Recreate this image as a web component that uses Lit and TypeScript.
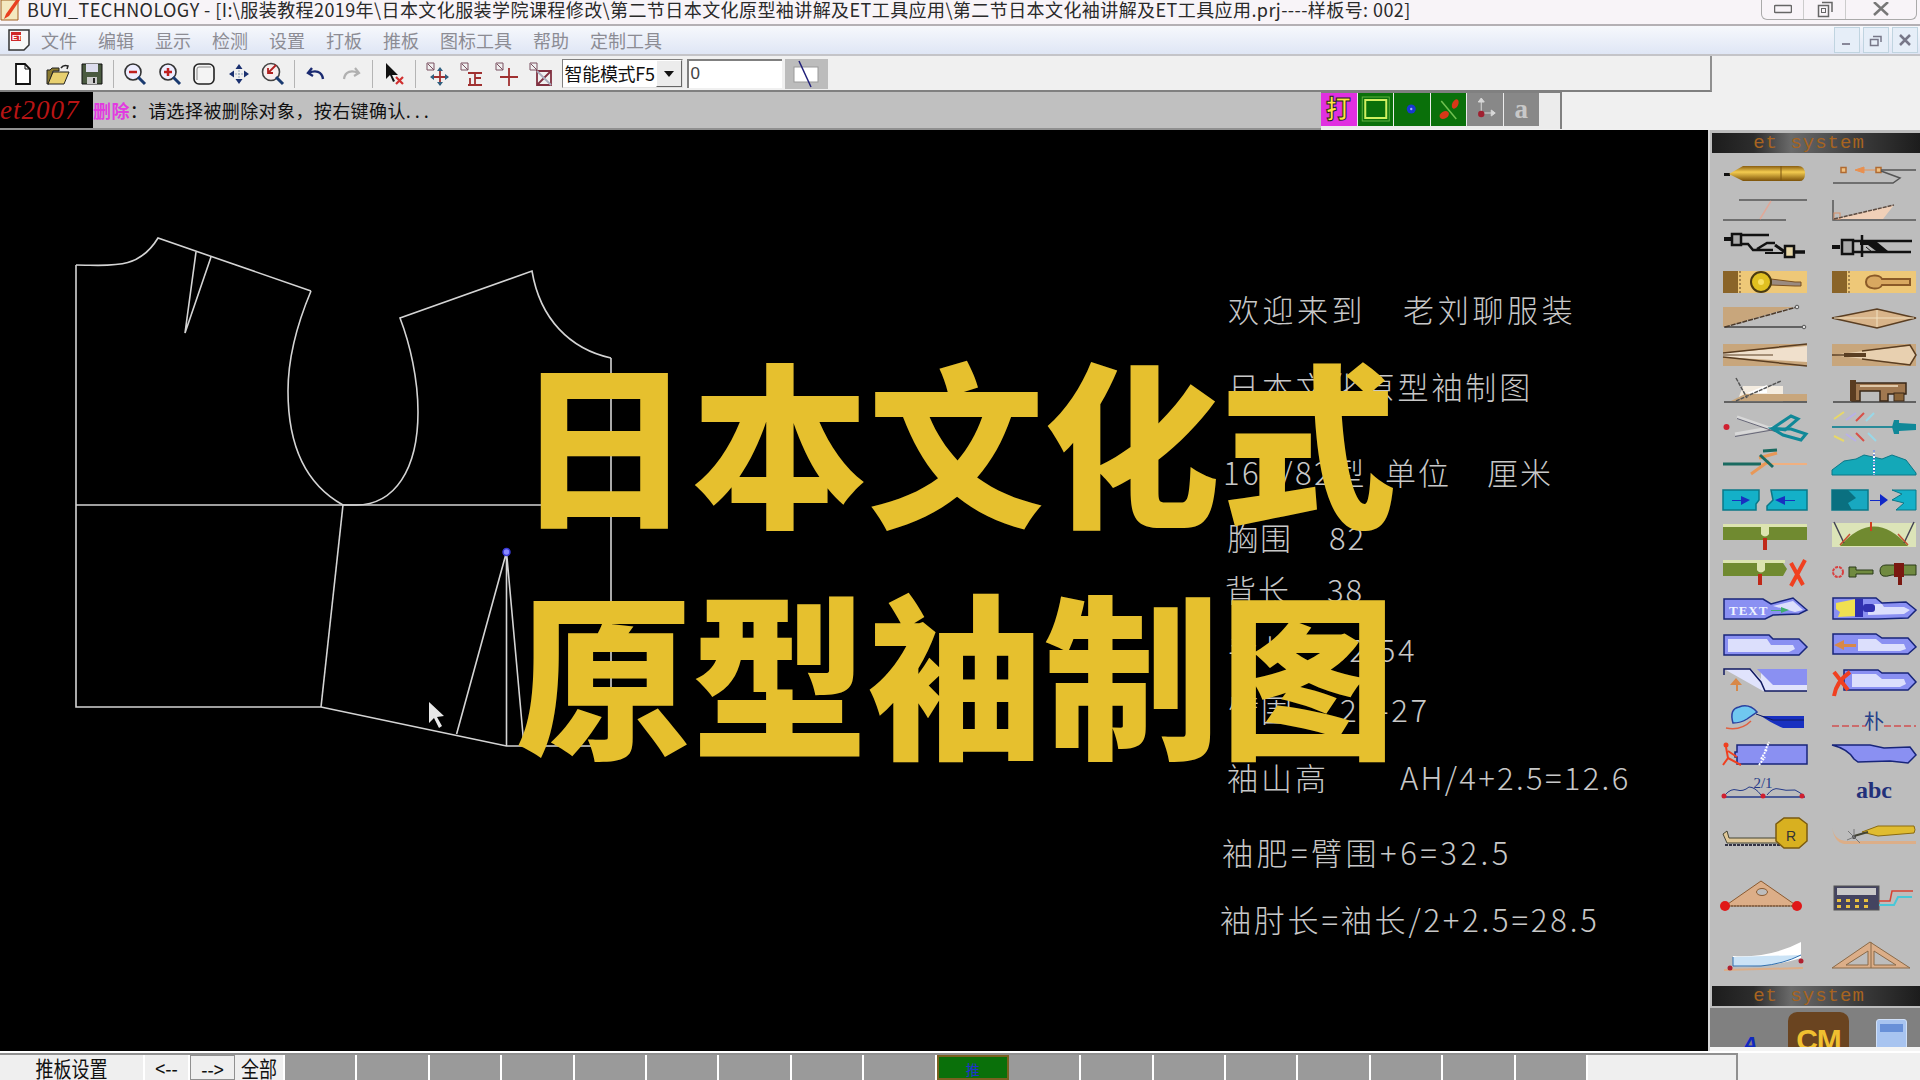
import { LitElement, html, css, svg } from 'lit';
import { customElement } from 'lit/decorators.js';

const CJK = `"Noto Sans CJK SC", "Noto Sans", sans-serif`;

const MENU = ['文件', '编辑', '显示', '检测', '设置', '打板', '推板', '图标工具', '帮助', '定制工具'];

// toolbar glyphs, null is a separator
const TOOLS = [
  svg`<path d="M5 2h9l5 5v15H5z" fill="#fff" stroke="#111" stroke-width="1.800"/><path d="M14 2v5h5" fill="none" stroke="#111"/>`,
  svg`<path d="M1 22V8h3l2-2h7v3H7L3 22z" fill="#8a7a30" stroke="#222"/><path d="M2 22l5-12h16l-5 12z" fill="#e8d070" stroke="#222"/><path d="M15 6c2-3 4-3 7-2l-1 3" fill="none" stroke="#222" stroke-width="1.500"/>`,
  svg`<path d="M2 2h20v20H2z" fill="#4a5a40" stroke="#111"/><path d="M6 2h12v8H6z" fill="#dde"/><path d="M7 15h10v7H7z" fill="#ccc"/><path d="M13 16h2v5h-2z" fill="#222"/>`,
  null,
  svg`<circle cx="10" cy="10" r="8" fill="#eef" stroke="#333" stroke-width="1.600"/><path d="M6 10h8" stroke="#c02020" stroke-width="2.500"/><path d="M15 15l7 7" stroke="#1a3a70" stroke-width="3"/>`,
  svg`<circle cx="10" cy="10" r="8" fill="#eef" stroke="#333" stroke-width="1.600"/><path d="M6 10h8M10 6v8" stroke="#c02020" stroke-width="2.500"/><path d="M15 15l7 7" stroke="#1a3a70" stroke-width="3"/>`,
  svg`<rect x="2" y="2" width="20" height="20" rx="5" fill="#f4f4f4" stroke="#222" stroke-width="1.600"/><path d="M5 18V7q0-2 2-2h12" fill="none" stroke="#888"/>`,
  svg`<path d="M12 2l3.500 5h-7zM12 22l-3.500-5h7zM2 12l5-3.500v7zM22 12l-5 3.500v-7z" fill="#1a3070"/><path d="M12 8v8M8 12h8" stroke="#9ab" stroke-dasharray="2 1"/>`,
  svg`<circle cx="10" cy="10" r="8.500" fill="#f8eeee" stroke="#444" stroke-width="1.600"/><path d="M15 3L7 11M7 6v5h5" fill="none" stroke="#b02020" stroke-width="1.800"/><path d="M15 15l7 7" stroke="#1a3a70" stroke-width="3"/>`,
  null,
  svg`<path d="M8 6L4 11l5 3M5 11c6-3 13-2 14 6" fill="none" stroke="#1a2a70" stroke-width="2.400"/>`,
  svg`<path d="M16 6l4 5-5 3M19 11c-6-3-13-2-14 6" fill="none" stroke="#b0b0b0" stroke-width="2.200"/>`,
  null,
  svg`<path d="M4 1l0 16 4-4 3 7 2-1-3-6h6z" fill="#111"/><path d="M14 15l7 7M21 15l-7 7" stroke="#d03030" stroke-width="2.200"/>`,
  null,
  svg`<path d="M2 1h7v7H2zM3 2l6 6" fill="none" stroke="#7a5060"/><path d="M15 7v16M7 15h16" stroke="#a03030" stroke-width="1.800"/><path d="M15 5l-3 4h6zM15 24l-3-4h6zM5 15l4-3v6zM24 15l-4-3v6z" fill="#306080"/>`,
  svg`<path d="M2 1h7v7H2zM3 2l6 6" fill="none" stroke="#7a5060"/><path d="M9 11h14M16 11v12M11 16v7M9 23h14M16 16h6" fill="none" stroke="#a03030" stroke-width="1.800"/>`,
  svg`<path d="M2 1h7v7H2zM3 2l6 6" fill="none" stroke="#7a5060"/><path d="M15 6v18M6 15h18" stroke="#a03030" stroke-width="1.800"/>`,
  svg`<path d="M2 1h7v7H2zM3 2l6 6" fill="none" stroke="#7a5060"/><path d="M9 9h14v14H9zM9 23L23 9" fill="none" stroke="#803040" stroke-width="1.800"/><path d="M9 9l14 14" stroke="#aab" stroke-width="1.800"/>`,
];

const STATUS_BTNS = [
  { cls: 'magenta', icon: svg`<text x="17" y="25" font-size="25" font-weight="700" text-anchor="middle" fill="#ffe640" stroke="#222" stroke-width="1" font-family=${CJK}>打</text>` },
  { cls: 'green', icon: svg`<rect x="7" y="7" width="21" height="18" fill="#0a700a" stroke="#d0f060" stroke-width="2"/><rect x="4" y="4" width="27" height="24" fill="none" stroke="#60b040"/>` },
  { cls: 'green', icon: svg`<circle cx="17" cy="16" r="4.500" fill="#1838d0"/><circle cx="17" cy="16" r="1.200" fill="#a0b0ff"/>` },
  { cls: 'green', icon: svg`<path d="M10 8l15 18" stroke="#70c050" stroke-width="1.500"/><ellipse cx="24" cy="11" rx="3" ry="5" fill="#d83818" transform="rotate(25 24 11)"/><ellipse cx="13" cy="22" rx="5" ry="3.500" fill="#d83818" transform="rotate(-30 13 22)"/>` },
  { cls: 'gray', icon: svg`<path d="M14 6v14M14 20h13M14 5l-3 4h6zM28 20l-4-3v6z" stroke="#d8d8d8" fill="#d8d8d8"/><circle cx="14" cy="21" r="3.200" fill="#a02030"/>` },
  { cls: 'gray', icon: svg`<text x="17" y="25" font-size="27" font-weight="700" text-anchor="middle" fill="#c8c8c8" font-family="Liberation Serif">a</text>` },
];

// one left/right pair per row, drawn in a 84x34 box
const bar = (y: number, h: number, c: string) => svg`<rect x="0" y=${y} width="84" height=${h} fill=${c}/>`;
const stair = '#5a3e22';

const blue = (shape: string, inner: string) => svg`<path d=${shape} fill="#8a90f2" stroke="#18257a" stroke-width="1.500"/><path d=${inner} fill="#dcdffc"/>`;

const ICONS = [
  svg`<defs><linearGradient id="gold" x1="0" y1="0" x2="0" y2="1"><stop offset="0" stop-color="#8a5e10"/><stop offset=".4" stop-color="#f4cc50"/><stop offset="1" stop-color="#7a5008"/></linearGradient></defs>
    <path d="M1 17h6v3H1z" fill="#111"/><path d="M6 18l14-8h55q7 0 7 8t-7 7H20z" fill="url(#gold)"/><path d="M58 10v15" stroke="#7a5510"/>`,
  svg`<rect x="9" y="11.500" width="5" height="5" fill="#f0c080" stroke="#b06a30" stroke-width="1.500"/><path d="M43 14H32V11L23 14L32 17V14" fill="#e89050" stroke="#e89050"/><rect x="44" y="11.500" width="5" height="5" fill="#f0c080" stroke="#b06a30" stroke-width="1.500"/><path d="M49 14H84" stroke="#555" stroke-width="1.500"/><path d="M49 15L68 22L61 27H1" fill="none" stroke="#555" stroke-width="1.500"/>`,
  svg`<path d="M16 8H84M0 28H63" stroke="#555" stroke-width="1.500"/><path d="M48 9L37 27" stroke="#e0a898" stroke-width="1.500"/>`,
  svg`<path d="M2 27L51 27L62 13Z" fill="#f0d0b8"/><path d="M1 8V28H84" fill="none" stroke="#555" stroke-width="1.500"/><rect x="2" y="21" width="6" height="6" fill="none" stroke="#d89068"/><path d="M2 27L62 13" stroke="#5a4a40" stroke-width="1.500" stroke-dasharray="4 1"/>`,
  svg`<path d="M1 10H9" stroke="#111" stroke-width="4"/><path d="M18 6L46 6M18 15H25L30 21H50M34 20L44 14H52" stroke="#111" stroke-width="2.500" fill="none"/><path d="M42 24H60" stroke="#111" stroke-width="2"/><path d="M52 16L62 23" stroke="#111" stroke-width="3"/><rect x="9" y="5" width="9" height="11" fill="#aaa" stroke="#111" stroke-width="2.500"/><rect x="62" y="17" width="9" height="11" fill="#e8d8a8" stroke="#111" stroke-width="2.500"/><path d="M71 23h11" stroke="#111" stroke-width="3.500"/>`,
  svg`<path d="M0 18h8" stroke="#111" stroke-width="4"/><rect x="10" y="11" width="11" height="14" fill="#aaa" stroke="#111" stroke-width="2.500"/><path d="M21 12H80M21 23H79M30 6V28" stroke="#111" stroke-width="2.500" fill="none"/><path d="M28 13H45L56 22H44L36 16H28Z" fill="#111"/><path d="M34 18l6 5" stroke="#111"/>`,
  svg`${bar(6, 22, '#eec878')}<rect x="0" y="6" width="15" height="22" fill="#8a6428"/><path d="M17 6v22" stroke="#5a3e22" stroke-dasharray="2 2"/><path d="M48 14L72 17H78V21H72L48 20Z" fill="#9a8a80" stroke="#7a5020"/><circle cx="38" cy="17" r="10" fill="#e0c020" stroke="#4a3a10" stroke-width="2"/><circle cx="38" cy="17" r="3" fill="#f8e060"/>`,
  svg`${bar(6, 22, '#eec878')}<rect x="0" y="6" width="15" height="22" fill="#8a6428"/><path d="M17 6v22" stroke="#5a3e22" stroke-dasharray="2 2"/><path d="M34 17C34 9 48 9 50 14H78V20H50C48 25 34 25 34 17Z" fill="#d8a860" stroke="#8a5a28" stroke-width="2"/>`,
  svg`<path d="M0 6H70L1 26H0Z" fill="#c8a67c"/><path d="M1 26H80" stroke="#444" stroke-width="1.500"/><path d="M2 26L74 6" stroke="#4a3828" stroke-width="1.500" stroke-dasharray="5 1"/><circle cx="74" cy="6" r="1.800" fill="#ddd" stroke="#555"/><circle cx="81" cy="26" r="1.800" fill="#ddd" stroke="#555"/>`,
  svg`<path d="M0 17L45 8L84 17L45 27Z" fill="#d8b48a" stroke=${stair} stroke-width="1.500"/><path d="M2 17H82M45 9V26" stroke="#f0e0c0"/>`,
  svg`${bar(6, 22, '#c8a67c')}<path d="M0 15L84 8V24L0 19Z" fill="#f0e0cc"/><path d="M0 15L84 6M0 19L84 28" stroke=${stair} stroke-width="1.500" fill="none"/><path d="M0 17H50" stroke=${stair}/>`,
  svg`${bar(6, 22, '#c8a67c')}<path d="M0 17L40 12L78 8L84 17L78 26L40 22Z" fill="#e8d0b0"/><path d="M0 17H30" stroke=${stair} stroke-width="1.500"/><path d="M12 15h22v4H12z" fill=${stair}/><path d="M30 13L78 7L84 17L78 27L30 21" fill="none" stroke=${stair} stroke-width="1.500"/>`,
  svg`<path d="M20 12L60 12V28H14Z" fill="#f4ece0"/><path d="M22 20H84V27H8Z" fill="#c8a67c"/><path d="M24 19L44 11V19Z" fill="#fff"/><path d="M1 28H84" stroke="#444" stroke-width="1.500"/><path d="M13 27L58 7M13 4L24 24" stroke="#555" stroke-width="1.500" stroke-dasharray="4 1" fill="none"/>`,
  svg`<path d="M1 28H84" stroke="#444" stroke-width="1.500"/><path d="M20 9H74V20H56V27H48V17H28V27H20Z" fill="#a07850" stroke="#3a2818" stroke-width="1.500"/><path d="M28 12H66" stroke="#e0c8a8" stroke-width="2"/><rect x="18" y="6" width="6" height="21" fill="#5a3c20"/><rect x="62" y="19" width="10" height="8" fill="#8a6438" stroke="#3a2818"/>`,
  svg`<circle cx="3.500" cy="17" r="3" fill="#d02030"/><path d="M14 7L52 20M12 24L52 17" stroke="#d8d8d8" stroke-width="3"/><path d="M14 7L52 20M12 25L52 18" stroke="#667" transform="translate(0 1.500)"/><path d="M50 18L68 6L75 9L62 20Z" fill="none" stroke="#108898" stroke-width="3"/><path d="M50 19H68L83 24L78 30L60 25Z" fill="none" stroke="#108898" stroke-width="3"/>`,
  svg`<path d="M0 17H84" stroke="#2a8a98" stroke-width="2"/><path d="M2 9L12 2M2 26L12 31" stroke="#e8d868" stroke-width="2"/><path d="M14 10L24 3M14 24L24 31" stroke="#b8b0e8" stroke-width="2"/><path d="M24 11L32 3M24 23L32 31" stroke="#d85048" stroke-width="2"/><path d="M34 11L42 3M36 23L44 31" stroke="#98d8e8" stroke-width="2"/><path d="M60 17L62 10H67V24H62ZM67 13L84 14V20L67 21Z" fill="#108898"/>`,
  svg`<path d="M0 17H38" stroke="#1a6a60" stroke-width="3"/><path d="M38 17H84" stroke="#f0b080" stroke-width="2"/><path d="M36 11L54 6M28 27L46 14" stroke="#e89858" stroke-width="3"/><path d="M37 8L50 20" stroke="#1a6a60" stroke-width="3"/><path d="M40 4L54 3" stroke="#1a6a60" stroke-width="3"/>`,
  svg`<path d="M0 28V23L12 14L24 12L32 8L50 12L60 8L74 13L84 26V28Z" fill="#14a8b8" stroke="#0a7888"/><path d="M42 3V28" stroke="#fff" stroke-width="2" stroke-dasharray="2 1"/><path d="M42 3V28" stroke="#1840c0" stroke-dasharray="2 2"/>`,
  svg`<path d="M0 7H36V17L33 21V27H0Z" fill="#14b0c8" stroke="#0a7888" stroke-width="1.500"/><path d="M48 7H84V27H44V23L50 17Z" fill="#14b0c8" stroke="#0a7888" stroke-width="1.500"/><path d="M9 17H18V13L27 17L18 22V18H9ZM72 17H62V13L52 17L62 22V18H72Z" fill="#1830c0"/>`,
  svg`<path d="M0 7H36V27H0Z" fill="#18a8c0" stroke="#0a7888" stroke-width="1.500"/><path d="M0 7H16L24 15L16 20L20 27H0Z" fill="#0a7080"/><path d="M38 17H48V11L56 17L48 23V18H38Z" fill="#1028c8"/><path d="M60 7H84V27H64L72 20L60 17L70 11Z" fill="#14b0c8" stroke="#0a7888"/>`,
  svg`<path d="M0 5H84V8H0Z" fill="#dce4b0"/><path d="M0 8H38V15Q42 19 46 15V8H84V21H0Z" fill="#708a30"/><path d="M38 5V15Q42 20 46 15V5Z" fill="#dce4b0"/><rect x="40" y="19" width="4" height="12" fill="#c02818"/>`,
  svg`<path d="M0 4H84V28H0Z" fill="#dce4b8"/><path d="M8 27Q42 -12 76 27Z" fill="#708a30"/><path d="M2 3L12 24M82 3L72 24" stroke="#445" stroke-width="1.500"/><path d="M39 3V12" stroke="#d04020" stroke-width="2"/><path d="M8 26L18 15M76 26L66 15" stroke="#c85030" stroke-width="1.500"/>`,
  svg`<path d="M0 5H62V8H0Z" fill="#dce4b0"/><path d="M0 8H34V15Q37 19 42 15V8H60L64 14L60 21H0Z" fill="#708a30"/><path d="M34 5V15Q38 20 42 15V5Z" fill="#dce4b0"/><rect x="35" y="19" width="4" height="11" fill="#c02818"/><path d="M68 31L82 5M68 8L80 30" stroke="#f04020" stroke-width="4"/>`,
  svg`<circle cx="6" cy="17" r="5" fill="none" stroke="#d84040" stroke-width="2" stroke-dasharray="3 1"/><path d="M17 12H24V15H41V19H24V22H17Z" fill="#708a40" stroke="#2a3a18"/><path d="M48 16Q48 10 54 10H84V20H60Q48 24 48 16Z" fill="#708a40" stroke="#2a3a18"/><path d="M62 8H72V22H70V30H66V22H62Z" fill="#7a1810"/>`,
  svg`${blue('M1 7H40L48 12L70 6L84 18L76 22L50 23L42 27H1Z', 'M50 14L70 9L80 18L72 20Z')}<text x="6" y="23" font-size="13" font-weight="700" fill="#f0f4ff" font-family="Liberation Serif" letter-spacing="1">TEXT</text><path d="M48 18H58V15L66 18L58 21V19H48Z" fill="#40b070"/>`,
  svg`${blue('M1 6H44L50 11L74 10L84 18L76 26L46 27H1Z', 'M36 12H50L52 15H72L78 18L72 22L36 23Z')}<path d="M4 11L24 7V24L6 25L8 20L4 17Z" fill="#f0e050"/><rect x="23" y="7" width="8" height="18" fill="#3030b0"/><rect x="31" y="12" width="12" height="8" rx="3" fill="#3030b0"/>`,
  svg`${blue('M1 7H46L50 11H76L84 19L76 27H1Z', 'M5 11H44L48 17H70L72 21L66 24H5Z')}`,
  svg`${blue('M1 6H44L50 10H76L84 19L76 26H1Z', 'M26 11H44L50 16H72L74 21L68 23H26Z')}<path d="M24 16H12V12L2 17L12 22V19H24Z" fill="#d88848"/>`,
  svg`<path d="M1 5H28L38 15V9H84V27H40Z" fill="#e0e3fc"/><path d="M34 5H84V21H50Z" fill="#8a90f2"/><path d="M1 11V5H27L38 18L42 27H84" fill="none" stroke="#101a60" stroke-width="1.500"/><path d="M13 27V21H7L13 14L19 21H15V27Z" fill="#d88848"/>`,
  svg`${blue('M12 6H46L50 9H76L84 18L76 26H12Z', 'M20 10H44L50 15H72L74 20L68 23H20Z')}<path d="M2 32Q4 18 18 8M2 8L16 26" stroke="#f04020" stroke-width="4" fill="none"/>`,
  svg`<path d="M3 27Q18 30 28 20" stroke="#e06040" stroke-width="1.500" fill="none"/><path d="M10 22Q6 8 16 6Q26 2 34 11L24 18Q18 22 10 22Z" fill="#70c8f0" stroke="#2840a0" stroke-width="1.500"/><path d="M38 15H81V27H60Q48 22 38 15Z" fill="#1830c0"/><path d="M33 13L50 19H81" stroke="#101a60" fill="none"/>`,
  svg`<path d="M0 25H34M52 25H84" stroke="#d05050" stroke-width="1.500" stroke-dasharray="7 3"/><text x="42" y="28" font-size="20" text-anchor="middle" fill="#25408a" font-family=${CJK}>朴</text>`,
  svg`<path d="M14 8H84V27H14V20H12V15H14Z" fill="#8a90f2" stroke="#18257a" stroke-width="1.500"/><path d="M42 14L46 5M38 22L44 12M36 28L42 20" stroke="#fff" stroke-width="2" stroke-dasharray="2 1"/><circle cx="3" cy="8" r="2.500" fill="#f04020"/><path d="M3 10L5 21L0 28M5 14L14 20M5 21L18 28" stroke="#f04020" stroke-width="2" fill="none"/>`,
  svg`<path d="M0 8H38L52 11L78 10L84 18L76 26L58 24L26 25L22 22Q16 12 0 8Z" fill="#8a90f2" stroke="#18257a" stroke-width="1.500"/>`,
  svg`<path d="M0 24H82" stroke="#243a88" stroke-width="1.500"/><path d="M2 22Q8 15 14 17T26 14Q32 14 38 22M44 22Q50 14 56 16T72 17Q76 19 80 22" fill="none" stroke="#243a88"/><circle cx="1" cy="23" r="2.500" fill="#d02030"/><circle cx="40" cy="23" r="2.500" fill="#d02030"/><circle cx="79" cy="23" r="2.500" fill="#d02030"/><text x="40" y="15" font-size="15" text-anchor="middle" fill="#243a88" font-family="Liberation Serif">2/1</text>`,
  svg`<text x="42" y="25" font-size="24" font-weight="700" text-anchor="middle" fill="#22307a" font-family="Liberation Serif">abc</text>`,
  svg`<path d="M0 16L4 25L58 25V20H6L4 13Z" fill="#e0c898" stroke="#443"/><path d="M2 27H58" stroke="#334" stroke-width="2" stroke-dasharray="3 1"/><path d="M53 6L61 0H76L84 6V23L76 30H61L53 23Z" fill="#d8b020" stroke="#7a5a10" stroke-width="1.500"/><text x="68" y="23" font-size="14" text-anchor="middle" fill="#333" font-family="Liberation Sans">R</text>`,
  svg`<path d="M0 9Q2 22 14 23H84V26H12Q2 24 0 9Z" fill="#dcae88"/><path d="M30 14L46 8H82Q84 12 82 15L46 18Z" fill="#e0bc30" stroke="#8a6a10"/><path d="M22 18L36 14" stroke="#443" stroke-width="2"/><circle cx="22" cy="19" r="2" fill="#444"/><path d="M22 19L16 13M22 19L15 22M22 19L28 25M22 19L22 11" stroke="#777"/>`,
  svg`<path d="M2 24L38 -1L74 24Z" fill="#dcae88" stroke="#8a5a30"/><ellipse cx="39" cy="10" rx="5.500" ry="3.500" fill="#bdbdbd" stroke="#8a5a30"/><path d="M5 24H72" stroke="#6a4a30" stroke-dasharray="2 1"/><circle cx="2" cy="24" r="5" fill="#e01818"/><circle cx="74" cy="24" r="5" fill="#e01818"/>`,
  svg`<rect x="2" y="4" width="45" height="24" fill="#444460" stroke="#555"/><rect x="5" y="6" width="39" height="7" fill="#c8c8c8"/><path d="M5 17h4v3H5zM14 17h4v3h-4zM23 17h4v3h-4zM32 17h4v3h-4zM5 23h4v3H5zM14 23h4v3h-4zM23 23h4v3h-4zM32 23h4v3h-4z" fill="#e8c040"/><path d="M47 19H58L60 9H81" fill="none" stroke="#d84030" stroke-width="1.500"/><path d="M47 23H62L66 15H80" fill="none" stroke="#48c8d8" stroke-width="2"/>`,
  svg`<path d="M1 30L80 28" stroke="#dcae88" stroke-width="2"/><path d="M10 16Q48 18 78 2V18Q48 28 10 26Z" fill="#fff"/><path d="M10 17V26H38Q60 24 78 15" stroke="#3070b0" fill="#a8d0f0" fill-opacity=".6"/><circle cx="7" cy="28" r="2.500" fill="#b02030"/><circle cx="78" cy="21" r="2.500" fill="#b02030"/>`,
  svg`<path d="M0 28L38 2L78 28Z" fill="#dcae88" stroke="#8a6a48"/><path d="M14 25L36 11V25ZM42 11L64 25H42Z" fill="#bdbdbd" stroke="#8a6a48"/><path d="M39 2V28" stroke="#8a6a48"/>`,
];

const SHEET = [
  { x: 1228, y: 310, text: '欢迎来到', ls: 3.5 },
  { x: 1403, y: 310, text: '老刘聊服装', ls: 3.7 },
  { x: 1228, y: 387, text: '日本文化原型袖制图', ls: 2.9 },
  { x: 1223, y: 473, text: '160/82型', ls: 2.5 },
  { x: 1385, y: 473, text: '单位', ls: 2 },
  { x: 1487, y: 473, text: '厘米', ls: 2 },
  { x: 1227, y: 538, text: '胸围', ls: 2 },
  { x: 1329, y: 538, text: '82', ls: 2 },
  { x: 1225, y: 590, text: '背长', ls: 2 },
  { x: 1327, y: 590, text: '38', ls: 2 },
  { x: 1228, y: 650, text: '手长', ls: 2 },
  { x: 1330, y: 650, text: '52.54', ls: 2.6 },
  { x: 1228, y: 710, text: '臂围', ls: 2 },
  { x: 1340, y: 710, text: '26-27', ls: 2.6 },
  { x: 1227, y: 778, text: '袖山高', ls: 3 },
  { x: 1400, y: 778, text: 'AH/4+2.5=12.6', ls: 2.3 },
  { x: 1222, y: 853, text: '袖肥=臂围+6=32.5', ls: 3.5 },
  { x: 1220, y: 920, text: '袖肘长=袖长/2+2.5=28.5', ls: 2.8 },
];

const GREY_A = 9;
const GREY_B = 8;

@customElement('app-root')
export class AppRoot extends LitElement {
  static override styles = css`
    :host {
      display: flex;
      flex-direction: column;
      width: 1920px;
      height: 1080px;
      overflow: hidden;
      background: #f0f0f0;
      font-family: "Noto Sans CJK SC", "Noto Sans", sans-serif;
    }
    svg { display: block; }

    .title {
      flex: none;
      height: 24px;
      display: flex;
      align-items: center;
      background: #f8f4f8;
      border-bottom: 2px solid #b4b0b4;
      color: #2a2a2a;
      font-size: 18px;
      white-space: nowrap;
      overflow: hidden;
    }
    .title .app { width: 27px; height: 24px; flex: none; }
    .title .txt { flex: 1; line-height: 18px; margin-top: -6px; letter-spacing: .42px; }
    .winbtns {
      flex: none;
      display: flex;
      width: 154px;
      height: 19px;
      margin: -5px 3px 0 0;
      border: 1px solid #aaa;
      border-top: 0;
      border-radius: 0 0 6px 6px;
    }
    .winbtns div { display: flex; align-items: center; justify-content: center; }
    .winbtns div + div { border-left: 1px solid #ccc; }
    .winbtns .a { width: 41px; }
    .winbtns .b { flex: 1; }

    .menu {
      flex: none;
      height: 28px;
      display: flex;
      align-items: center;
      background: linear-gradient(#f6f8fc, #dfe6f5);
      border-bottom: 2px solid #c4c4c8;
      color: #8c8c94;
      font-size: 18px;
    }
    .menu .logo { width: 24px; height: 24px; margin: 0 10px 0 7px; flex: none; }
    .menu .items { display: flex; gap: 21px; flex: 1; }
    .mdi { display: flex; gap: 3px; margin-right: 2px; }
    .mdi div {
      width: 24px;
      height: 24px;
      border: 1px solid #c0d4e0;
      background: #e6eef8;
      display: flex;
      align-items: center;
      justify-content: center;
    }

    .tools {
      flex: none;
      width: 1712px;
      height: 36px;
      box-sizing: border-box;
      display: flex;
      align-items: center;
      padding: 1px 0 0 6px;
      background: #f0f0f0;
      border-right: 2px solid #909090;
      border-bottom: 2px solid #808080;
    }
    .tool { width: 34.500px; display: flex; justify-content: center; }
    .tool svg { width: 24px; height: 24px; }
    .sep { width: 8.500px; height: 28px; display: flex; justify-content: center; }
    .sep::before { content: ""; width: 1px; background: #b4b4b4; }
    .combo {
      width: 121px;
      height: 29px;
      margin-left: 4px;
      box-sizing: border-box;
      display: flex;
      align-items: stretch;
      background: #fff;
      border: 1px solid #808080;
      border-right-color: #e0e0e0;
      border-bottom-color: #e0e0e0;
      font-size: 18px;
      line-height: 26px;
      color: #111;
      white-space: nowrap;
      overflow: hidden;
    }
    .combo span { flex: 1; padding-left: 2px; overflow: hidden; letter-spacing: -0.3px; }
    .combo i {
      flex: none;
      width: 24px;
      background: #ececec;
      border: 1px solid #fff;
      border-right-color: #666;
      border-bottom-color: #666;
      display: flex;
      align-items: center;
      justify-content: center;
    }
    .combo i::after {
      content: "";
      border: 5px solid transparent;
      border-top: 6px solid #111;
      border-bottom: 0;
    }
    .num {
      width: 95px;
      height: 29px;
      margin-left: 4px;
      box-sizing: border-box;
      background: #fff;
      border-top: 2px solid #808080;
      border-left: 2px solid #808080;
      font-family: "Liberation Sans", sans-serif;
      font-size: 17px;
      line-height: 26px;
      padding-left: 2px;
      color: #444;
    }
    .slant {
      width: 43px;
      height: 30px;
      margin-left: 3px;
      background: #bcbcbc;
    }

    .status {
      flex: none;
      height: 38px;
      display: flex;
      font-size: 18px;
    }
    .status .left {
      width: 1321px;
      flex: none;
      display: flex;
      align-items: center;
      height: 36px;
      background: #c0c0c0;
      border-bottom: 2px solid #909090;
      color: #111;
      white-space: nowrap;
      letter-spacing: .4px;
    }
    .brand {
      width: 93px;
      height: 36px;
      flex: none;
      background: #000;
      color: #b81414;
      font: italic 27px/36px "Liberation Serif", serif;
      letter-spacing: 1px;
      overflow: hidden;
    }
    .del { color: #e23ae0; font-weight: 700; }
    .dots { letter-spacing: 4px; }
    .status .right {
      width: 241px;
      flex: none;
      box-sizing: border-box;
      display: flex;
      align-items: flex-start;
      border-top: 2px solid #808080;
      border-right: 2px solid #808080;
      height: 38px;
      margin-top: -1px;
      background: #ececec;
    }
    .sbtn { width: 35.500px; height: 33px; margin-right: 1px; flex: none; }
    .sbtn.magenta { background: #e030e0; }
    .sbtn.green { background: #0a700a; }
    .sbtn.gray { background: #888; }

    .work { flex: 1; min-height: 0; display: flex; }
    .canvas {
      position: relative;
      flex: 1;
      background: #000;
      overflow: hidden;
      border-right: 2px solid #d8d8d8;
    }
    .canvas svg { position: absolute; inset: 0; }
    .note {
      position: absolute;
      font-size: 31px;
      line-height: 40px;
      font-weight: 300;
      color: #c8c8c8;
      white-space: nowrap;
    }
    .headline {
      position: absolute;
      left: 516px;
      top: 192px;
      font-size: 176px;
      line-height: 231px;
      font-weight: 900;
      color: #e6c02e;
      white-space: nowrap;
    }

    .panel {
      flex: none;
      width: 210px;
      display: flex;
      flex-direction: column;
      background: #bdbdbd;
    }
    .etbar {
      flex: none;
      height: 20px;
      margin-left: 2px;
      display: flex;
      align-items: center;
      justify-content: center;
      padding-right: 14px;
      background: linear-gradient(90deg, #1c1c1c 0, #2c2c2c 20%, #6a6a6a 38%, #3c3c3c 70%, #1c1c1c 100%);
      color: #a86420;
      font: 19px/20px "Liberation Mono", monospace;
      letter-spacing: 1px;
    }
    .etbar.top { margin-top: 3px; }
    .icons {
      flex: 1;
      min-height: 0;
      display: grid;
      grid-template-columns: 84px 84px;
      grid-template-rows: repeat(18, 36.300px) 54px 74px 42px;
      column-gap: 25px;
      padding: 2px 0 0 13px;
      align-items: center;
    }
    .icons svg { width: 84px; height: 34px; overflow: visible; }
    .tray {
      flex: none;
      position: relative;
      height: 39px;
      margin-top: 2px;
      background: #808080;
      overflow: hidden;
    }
    .tray .a {
      position: absolute;
      left: 32px;
      top: 24px;
      font: italic 700 22px "Liberation Sans", sans-serif;
      color: #1028c0;
    }
    .tray .cm {
      position: absolute;
      left: 78px;
      top: 4px;
      width: 61px;
      height: 50px;
      border-radius: 9px;
      background: #6a4420;
      color: #f0c030;
      font: 700 30px/56px "Liberation Sans", sans-serif;
      text-align: center;
      letter-spacing: -1px;
    }
    .tray .calc {
      position: absolute;
      left: 166px;
      top: 11px;
      width: 29px;
      height: 40px;
      border-radius: 3px;
      background: #a8c4f0;
      border: 1px solid #d0e0f8;
    }
    .tray .calc::before {
      content: "";
      display: block;
      margin: 4px 3px;
      height: 8px;
      background: #6890d8;
    }
    .panel-end { flex: none; height: 4px; background: #f4f4f4; }

    .tabs {
      flex: none;
      height: 27px;
      display: flex;
      border-top: 2px solid #fff;
      font-size: 18px;
      line-height: 25px;
      color: #111;
      white-space: nowrap;
    }
    .tabs .wrap {
      width: 1738px;
      flex: none;
      box-sizing: border-box;
      display: flex;
      border-top: 2px solid #909090;
      border-right: 2px solid #909090;
      background: #efefef;
      overflow: hidden;
    }
    .tab { flex: none; text-align: center; border-right: 2px solid #fff; box-sizing: border-box; }
    .tab span { display: inline-block; transform: scaleY(1.200); }
    .tab.w1 { width: 145px; }
    .tab.w2 { width: 45px; }
    .tab.w3 { width: 45px; border: 1px solid #909090; }
    .tab.w4 { width: 50px; }
    .tab.grey { width: 72.400px; background: #9a9a9a; }
    .tab.on {
      width: 72.400px;
      background: #0a700a;
      border: 2px solid #7a6020;
      color: #2030d0;
      font-size: 14px;
    }
  `;

  render() {
    const tabsA = Array.from({ length: GREY_A });
    const tabsB = Array.from({ length: GREY_B });
    return html`
      <div class="title">
        <svg class="app" viewBox="0 0 27 24">
          <path d="M1 0H18V20H1Z" fill="#f4e8c0" stroke="#a06020"/>
          <path d="M16 0L6 14L4 19L9 16L20 0Z" fill="#e84020"/>
        </svg>
        <div class="txt">BUYI_TECHNOLOGY - [I:\\服装教程2019年\\日本文化服装学院课程修改\\第二节日本文化原型袖讲解及ET工具应用\\第二节日本文化袖讲解及ET工具应用.prj----样板号: 002]</div>
        <div class="winbtns">
          <div class="a">
            <svg width="18" height="10"><rect x=".5" y="1.500" width="17" height="7" rx="1" fill="none" stroke="#666" stroke-width="1.500"/></svg>
          </div>
          <div class="a">
            <svg width="16" height="17"><path d="M5 1.500H15V11M1.500 4.500H11.500V15.500H1.500Z" fill="none" stroke="#666" stroke-width="1.500"/><rect x="4.500" y="7.500" width="4" height="4" fill="none" stroke="#666"/></svg>
          </div>
          <div class="b">
            <svg width="16" height="14"><path d="M1 0L15 13M15 0L1 13" stroke="#777" stroke-width="2.500"/></svg>
          </div>
        </div>
      </div>

      <div class="menu">
        <svg class="logo" viewBox="0 0 24 24">
          <path d="M2 2H22V17L17 22H2Z" fill="#f8f8f8" stroke="#333" stroke-width="1.500"/>
          <rect x="4" y="4" width="10" height="9" fill="#d02828"/>
          <text x="5" y="12" font-size="8" font-weight="700" fill="#fff" font-family="Liberation Sans">ET</text>
        </svg>
        <div class="items">${MENU.map((m) => html`<span>${m}</span>`)}</div>
        <div class="mdi">
          <div><svg width="12" height="12"><path d="M1 10H9" stroke="#889" stroke-width="2"/></svg></div>
          <div><svg width="14" height="14"><path d="M4 3.500H12V9M1.500 6.500H9V12.500H1.500Z" fill="none" stroke="#778" stroke-width="1.500"/></svg></div>
          <div><svg width="14" height="14"><path d="M2 2L12 12M12 2L2 12" stroke="#778" stroke-width="2.500"/></svg></div>
        </div>
      </div>

      <div class="tools">
        ${TOOLS.map((t) =>
          t === null
            ? html`<div class="sep"></div>`
            : html`<div class="tool"><svg viewBox="0 0 24 24">${t}</svg></div>`
        )}
        <div class="combo"><span>智能模式F5</span><i></i></div>
        <div class="num">0</div>
        <svg class="slant" viewBox="0 0 43 30">
          <rect x="9" y="8" width="24" height="15" fill="#fff" stroke="#999"/>
          <path d="M14 2L26 28" stroke="#20207a" stroke-width="1.500"/>
        </svg>
      </div>

      <div class="status">
        <div class="left">
          <div class="brand">et2007</div>
          <span class="del">删除</span><span>：请选择被删除对象，按右键确认</span><span class="dots">...</span>
        </div>
        <div class="right">
          ${STATUS_BTNS.map(
            (b) => html`<svg class="sbtn ${b.cls}" viewBox="0 0 35 33">${b.icon}</svg>`
          )}
        </div>
      </div>

      <div class="work">
        <div class="canvas">
          <svg width="1708" height="922" viewBox="0 131 1708 922" fill="none" stroke="#d4d4d4" stroke-width="1.600">
            <path d="M76 266V708H321L506.500 747H611V359"/>
            <path d="M76 266C110 266 138 272 158 239L311 292"/>
            <path d="M196 253L185 334L211 258"/>
            <path d="M311 292C295 330 288 365 288 392C288 445 305 485 343 506"/>
            <path d="M76 506H611"/>
            <path d="M343 506L321 708"/>
            <path d="M343 506H356C395 506 418 470 418 413C418 380 410 345 400 319L532 272C540 320 570 350 611 359"/>
            <path d="M506.500 553L456.600 735M506.500 553V747M506.500 553L524 747"/>
            <circle cx="506.500" cy="553" r="3.500" fill="#8888ff" stroke="#3a3ad8" stroke-width="1.500"/>
            <path d="M429 703V724L434 719L439 729L442 727L437 718L444 717Z" fill="#e8e8e8" stroke="none"/>
          </svg>
          ${SHEET.map(
            (n) => html`<div
              class="note"
              style="left:${n.x}px;top:${n.y - 131 - 20}px;letter-spacing:${n.ls}px"
            >${n.text}</div>`
          )}
          <div class="headline">日本文化式<br />原型袖制图</div>
        </div>
        <div class="panel">
          <div class="etbar top">et system</div>
          <div class="icons">${ICONS.map((i) => html`<svg viewBox="0 0 84 34">${i}</svg>`)}</div>
          <div class="etbar">et system</div>
          <div class="tray">
            <span class="a">A</span>
            <div class="cm">CM</div>
            <div class="calc"></div>
          </div>
          <div class="panel-end"></div>
        </div>
      </div>

      <div class="tabs">
        <div class="wrap">
          <div class="tab w1"><span>推板设置</span></div>
          <div class="tab w2"><span>&lt;--</span></div>
          <div class="tab w3"><span>--&gt;</span></div>
          <div class="tab w4"><span>全部</span></div>
          ${tabsA.map(() => html`<div class="tab grey"></div>`)}
          <div class="tab on">推</div>
          ${tabsB.map(() => html`<div class="tab grey"></div>`)}
        </div>
      </div>
    `;
  }
}
